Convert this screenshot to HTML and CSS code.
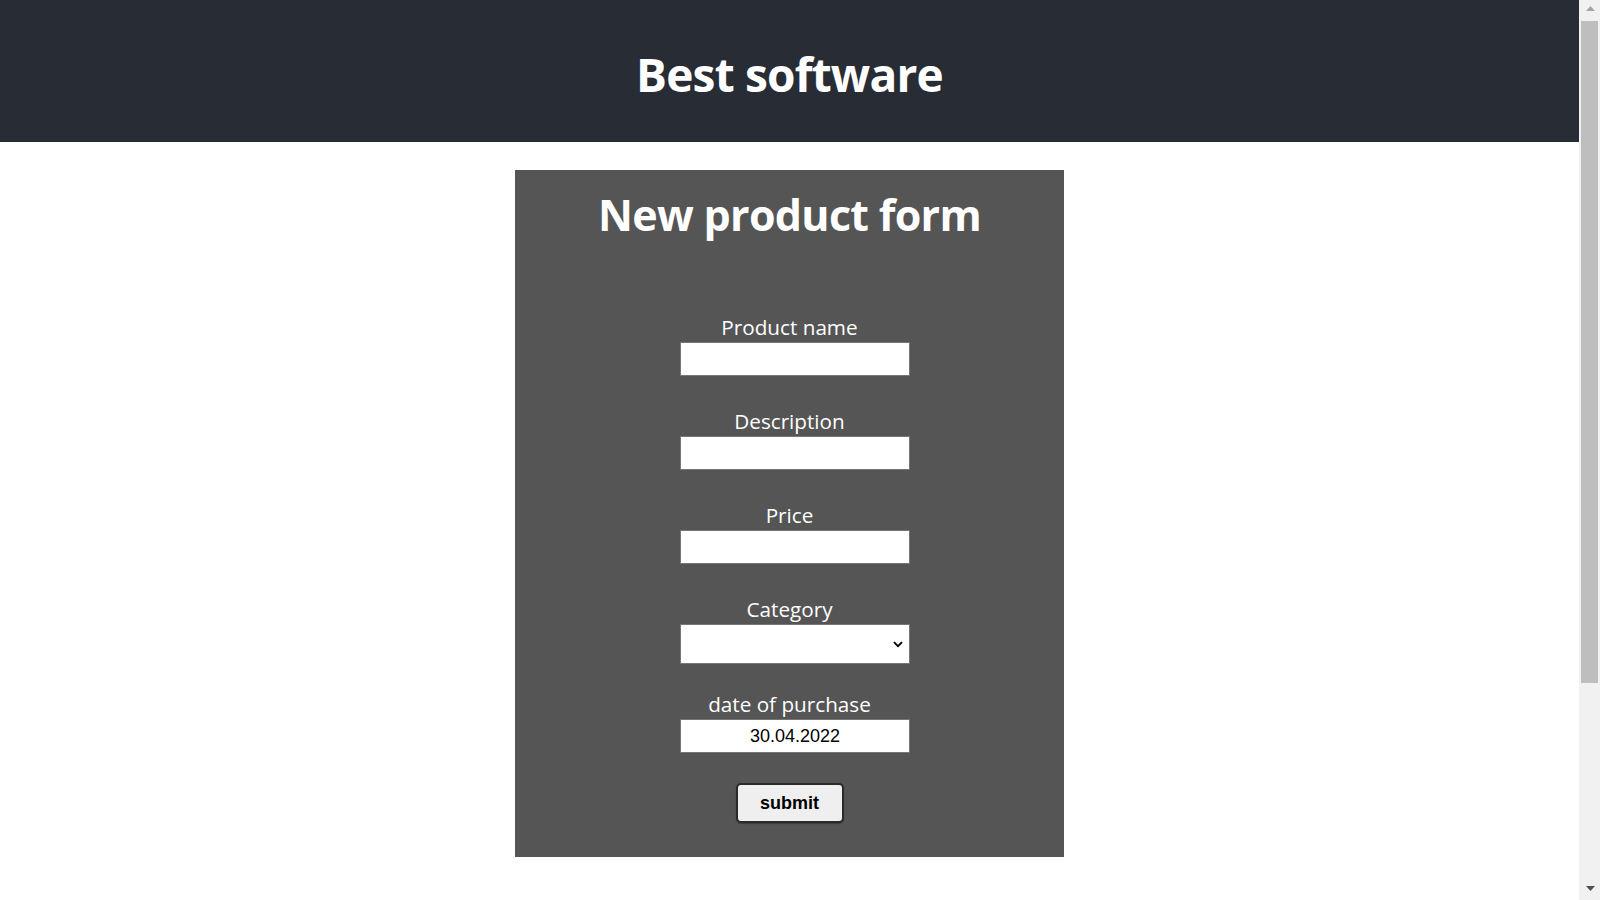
FILE: index.html
```html
<!DOCTYPE html>
<html lang="en">
<head>
<meta charset="utf-8">
<title>Best software</title>
<link rel="stylesheet" href="styles.css">
</head>
<body>
<div class="window">
  <div class="page">
    <header class="app-header">
      <h1 class="app-title">Best software</h1>
    </header>
    <main class="content">
      <form class="product-form">
        <h2 class="form-title">New product form</h2>
        <div class="field">
          <label class="field-label" for="name">Product name</label>
          <input class="field-input" id="name" type="text">
        </div>
        <div class="field">
          <label class="field-label" for="desc">Description</label>
          <input class="field-input" id="desc" type="text">
        </div>
        <div class="field">
          <label class="field-label" for="price">Price</label>
          <input class="field-input" id="price" type="text">
        </div>
        <div class="field field-select">
          <label class="field-label" for="cat">Category</label>
          <div class="select-wrap">
            <select class="field-input select-input" id="cat">
              <option></option>
            </select>
            <svg class="chevron" width="10" height="7" viewBox="0 0 10 7"><path d="M1 1.2 L5 5.2 L9 1.2" fill="none" stroke="#000" stroke-width="1.9"/></svg>
          </div>
        </div>
        <div class="field field-last">
          <label class="field-label" for="date">date of purchase</label>
          <input class="field-input date-input" id="date" type="text" value="30.04.2022">
        </div>
        <button class="submit-btn" type="button">submit</button>
      </form>
    </main>
  </div>
  <div class="scrollbar">
    <div class="sb-btn">
      <svg width="9" height="5" viewBox="0 0 9 5"><path d="M4.5 0 L9 5 L0 5 Z" fill="#a3a3a3"/></svg>
    </div>
    <div class="sb-track"><div class="sb-thumb"></div></div>
    <div class="sb-btn sb-btn-down">
      <svg width="9" height="5" viewBox="0 0 9 5"><path d="M0 0 L9 0 L4.5 5 Z" fill="#505050"/></svg>
    </div>
  </div>
</div>
</body>
</html>
```
FILE: styles.css
```css
html, body {
  margin: 0;
  padding: 0;
  height: 100%;
  overflow: hidden;
  background: #ffffff;
}

body {
  font-family: "Open Sans", "Noto Sans", sans-serif;
}

.window {
  display: flex;
  height: 100vh;
}

.page {
  flex: 1;
  overflow: hidden;
}

.app-header {
  height: 142px;
  background: #282c34;
  display: flex;
  align-items: center;
  justify-content: center;
}

.app-title {
  margin: 0;
  color: #ffffff;
  font-size: 46px;
  font-weight: 700;
  letter-spacing: -0.8px;
  line-height: 60px;
  padding-top: 6px;
}

.content {
  display: flex;
  justify-content: center;
  padding-top: 28px;
}

.product-form {
  width: 549px;
  background: #555555;
  padding: 17px 0 34px;
  display: flex;
  flex-direction: column;
  align-items: center;
}

.form-title {
  margin: 0 0 72px;
  color: #ffffff;
  font-size: 43px;
  font-weight: 700;
  letter-spacing: -0.7px;
  line-height: 56px;
}

.field {
  display: flex;
  flex-direction: column;
  align-items: center;
  margin-bottom: 33px;
}

.field-select {
  margin-bottom: 28px;
}

.field-last {
  margin-bottom: 30px;
}

.field-label {
  color: #ffffff;
  font-size: 20.7px;
  line-height: 24px;
  margin-bottom: 3px;
}

.field-input {
  box-sizing: border-box;
  width: 230px;
  height: 34px;
  margin: 0 0 0 11px;
  border: 1px solid #767676;
  background: #ffffff;
  font-family: "Liberation Sans", Arial, sans-serif;
  font-size: 18px;
  color: #000;
  padding: 1px 4px;
  outline: none;
}

.select-wrap {
  position: relative;
  margin-left: 11px;
}

.select-input {
  margin: 0;
  height: 40px;
  appearance: none;
  -webkit-appearance: none;
  border-radius: 0;
  display: block;
}

.chevron {
  position: absolute;
  right: 7px;
  top: 17px;
  pointer-events: none;
}

.date-input {
  text-align: center;
}

.submit-btn {
  box-sizing: border-box;
  width: 108px;
  height: 40px;
  background: #efefef;
  border: 2px solid #2a2a2a;
  border-radius: 5px;
  font-family: "Liberation Sans", Arial, sans-serif;
  font-weight: 700;
  font-size: 18px;
  color: #000;
  padding: 0;
  box-shadow: 0 1px 1px rgba(0, 0, 0, 0.3);
}

.scrollbar {
  width: 21px;
  flex: 0 0 21px;
  background: #f1f1f1;
  display: flex;
  flex-direction: column;
}

.sb-btn {
  height: 17px;
  display: flex;
  justify-content: center;
  align-items: center;
  padding-left: 1px;
}

.sb-btn svg {
  display: block;
}

.sb-btn-down {
  align-items: flex-start;
  padding-top: 3px;
  height: 14px;
}

.sb-track {
  flex: 1;
  padding: 4px 2px 0;
}

.sb-thumb {
  height: 662px;
  background: #bebebe;
}
```
